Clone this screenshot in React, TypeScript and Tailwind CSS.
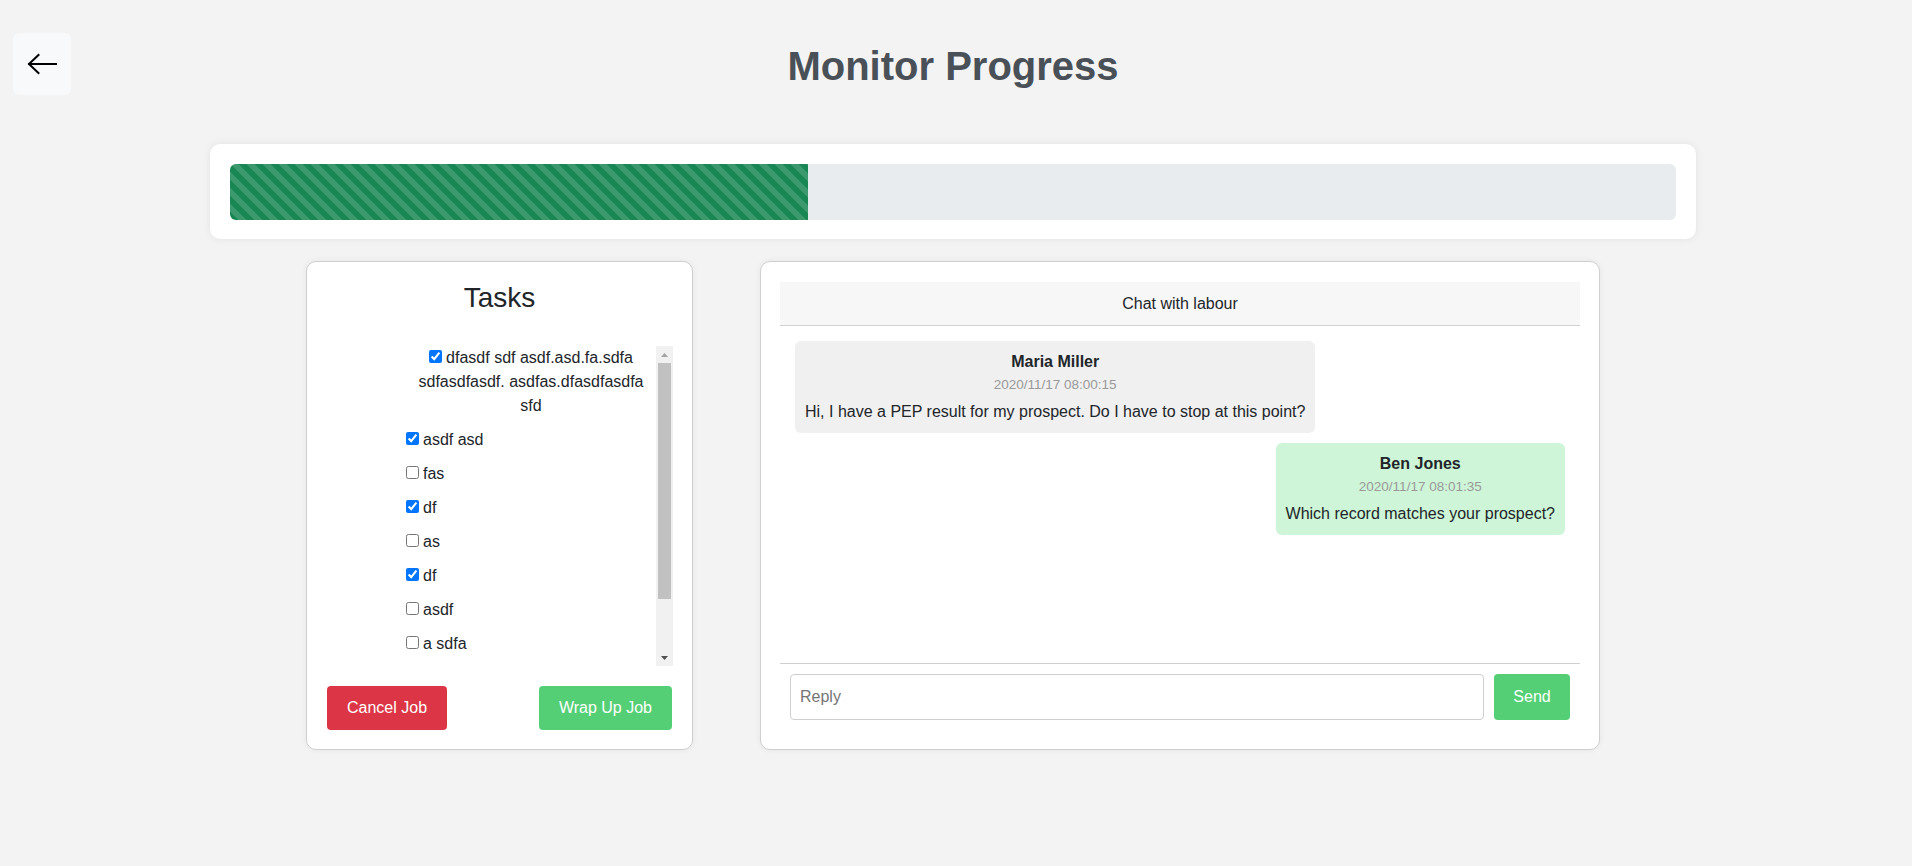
import { useEffect, useRef, useState } from 'react';

const PROGRESS = 40;

const TASKS = [
  { id: 1, label: 'dfasdf sdf asdf.asd.fa.sdfa sdfasdfasdf. asdfas.dfasdfasdfa sfd', done: true, wide: true },
  { id: 2, label: 'asdf asd', done: true },
  { id: 3, label: 'fas', done: false },
  { id: 4, label: 'df', done: true },
  { id: 5, label: 'as', done: false },
  { id: 6, label: 'df', done: true },
  { id: 7, label: 'asdf', done: false },
  { id: 8, label: 'a sdfa', done: false },
  { id: 9, label: 'sdf', done: false },
  { id: 10, label: 'fasd', done: false },
];

const MESSAGES = [
  { id: 1, name: 'Maria Miller', time: '2020/11/17 08:00:15', text: 'Hi, I have a PEP result for my prospect. Do I have to stop at this point?', mine: false },
  { id: 2, name: 'Ben Jones', time: '2020/11/17 08:01:35', text: 'Which record matches your prospect?', mine: true },
];

const TRACK = 286; // 320 minus the two 17px arrow buttons

function BackArrow() {
  return (
    <svg width="30" height="22" viewBox="0 0 30 22" fill="none" stroke="#000" strokeWidth="2" strokeLinecap="square">
      <path d="M2 11H29" />
      <path d="M11.5 2L2 11L11.5 20" strokeLinejoin="miter" />
    </svg>
  );
}

function Caret({ up, dim }: { up?: boolean; dim?: boolean }) {
  return (
    <svg width="7" height="4" viewBox="0 0 7 4" fill={dim ? '#a3a3a3' : '#505050'}>
      {up ? <path d="M3.5 0L7 4H0z" /> : <path d="M0 0h7L3.5 4z" />}
    </svg>
  );
}

export default function App() {
  const [tasks, setTasks] = useState(TASKS);
  const [reply, setReply] = useState('');
  const listRef = useRef<HTMLDivElement>(null);
  const [thumb, setThumb] = useState({ top: 0, height: 236, atTop: true, atEnd: false });

  const measure = () => {
    const el = listRef.current;
    if (!el) return;
    const ratio = el.clientHeight / el.scrollHeight;
    const height = Math.max(20, Math.round(TRACK * ratio));
    const max = el.scrollHeight - el.clientHeight;
    const top = max > 0 ? Math.round((el.scrollTop / max) * (TRACK - height)) : 0;
    setThumb({ top, height, atTop: el.scrollTop <= 0, atEnd: el.scrollTop >= max - 1 });
  };

  useEffect(measure, []);

  const toggle = (id: number) =>
    setTasks((t) => t.map((x) => (x.id === id ? { ...x, done: !x.done } : x)));

  return (
    <div className="min-h-screen bg-[#f3f3f3] pl-[13px] pr-[19px] pt-[33px] font-['Liberation_Sans',Arial,sans-serif] text-[#212529]">
      <header className="grid grid-cols-[1fr_auto_1fr] items-start">
        <div>
          <button className="flex h-[62px] w-[58px] items-center justify-center rounded-[6px] bg-[#f8f9fa]">
            <BackArrow />
          </button>
        </div>
        <h1 className="mt-[9px] text-[40px] font-bold leading-[48px] text-[#495057]">Monitor Progress</h1>
        <div />
      </header>

      <div className="mx-auto mt-[49px] w-[1486px] rounded-[10px] bg-white px-[20px] pb-[19px] pt-[20px] shadow-[0_0_8px_rgba(0,0,0,0.07)]">
        <div className="flex h-[56px] overflow-hidden rounded-[6px] bg-[#e9ecef]">
          <div
            className="h-full bg-[#198754] bg-[linear-gradient(45deg,rgba(255,255,255,.15)_25%,transparent_25%,transparent_50%,rgba(255,255,255,.15)_50%,rgba(255,255,255,.15)_75%,transparent_75%,transparent)] bg-[length:16px_16px]"
            style={{ width: `${PROGRESS}%` }}
          />
        </div>
      </div>

      <div className="mx-auto mt-[22px] flex w-[1294px] items-stretch gap-[67px]">
        {/* tasks */}
        <section className="flex w-[387px] flex-col rounded-[10px] border border-[#cfcfcf] bg-white px-[20px] pb-[19px] pt-[19px] shadow-[0_0_6px_rgba(0,0,0,0.06)]">
          <h3 className="mb-[31px] text-center text-[28px] font-normal leading-[34px]">Tasks</h3>
          <div className="-mr-[1px] flex h-[320px]">
            <div
              ref={listRef}
              onScroll={measure}
              className="flex-1 overflow-y-auto pl-[79px] text-[16px] leading-6 [scrollbar-width:none]"
            >
              {tasks.map((t) => (
                <label key={t.id} className={`mb-[10px] block ${t.wide ? 'text-center' : ''}`}>
                  <input
                    type="checkbox"
                    checked={t.done}
                    onChange={() => toggle(t.id)}
                    className="mr-[4px] h-[13px] w-[13px]"
                  />
                  {t.label}
                </label>
              ))}
            </div>
            <div className="flex w-[17px] flex-col bg-[#f1f1f1]">
              <div className="flex h-[17px] items-center justify-center">
                <Caret up dim={thumb.atTop} />
              </div>
              <div className="flex-1 px-[2px]">
                <div className="bg-[#c1c1c1]" style={{ marginTop: thumb.top, height: thumb.height }} />
              </div>
              <div className="flex h-[17px] items-center justify-center">
                <Caret dim={thumb.atEnd} />
              </div>
            </div>
          </div>
          <div className="mt-[20px] flex justify-between">
            <button className="h-[44px] rounded-[4px] bg-[#dc3545] px-[20px] text-[16px] text-white">Cancel Job</button>
            <button className="h-[44px] rounded-[4px] bg-[#54cf76] px-[20px] text-[16px] text-white">Wrap Up Job</button>
          </div>
        </section>

        {/* chat */}
        <section className="flex w-[840px] flex-col rounded-[10px] border border-[#cfcfcf] bg-white px-[19px] pb-[19px] pt-[20px] shadow-[0_0_6px_rgba(0,0,0,0.06)]">
          <div className="flex h-[44px] items-center justify-center border-b border-[#cfcfcf] bg-[#f7f7f7] text-[16px]">
            Chat with labour
          </div>
          <div className="flex flex-1 flex-col gap-[10px] p-[15px]">
            {MESSAGES.map((m) => (
              <div
                key={m.id}
                className={`rounded-[6px] px-[10px] py-[9px] text-center ${m.mine ? 'self-end bg-[#cef5d7]' : 'self-start bg-[#f0f0f0]'}`}
              >
                <div className="text-[16px] font-bold leading-6">{m.name}</div>
                <div className="text-[13.5px] leading-[21px] text-[#999]">{m.time}</div>
                <div className="mt-[5px] text-[16px] leading-6">{m.text}</div>
              </div>
            ))}
          </div>
          <div className="flex gap-[10px] border-t border-[#cfcfcf] p-[10px]">
            <input
              value={reply}
              onChange={(e) => setReply(e.target.value)}
              placeholder="Reply"
              className="h-[46px] flex-1 rounded-[4px] border border-[#cfcfcf] px-[9px] text-[16px] outline-none placeholder:text-[#757575]"
            />
            <button className="h-[46px] w-[76px] rounded-[4px] bg-[#54cf76] text-[16px] text-white">Send</button>
          </div>
        </section>
      </div>
    </div>
  );
}
